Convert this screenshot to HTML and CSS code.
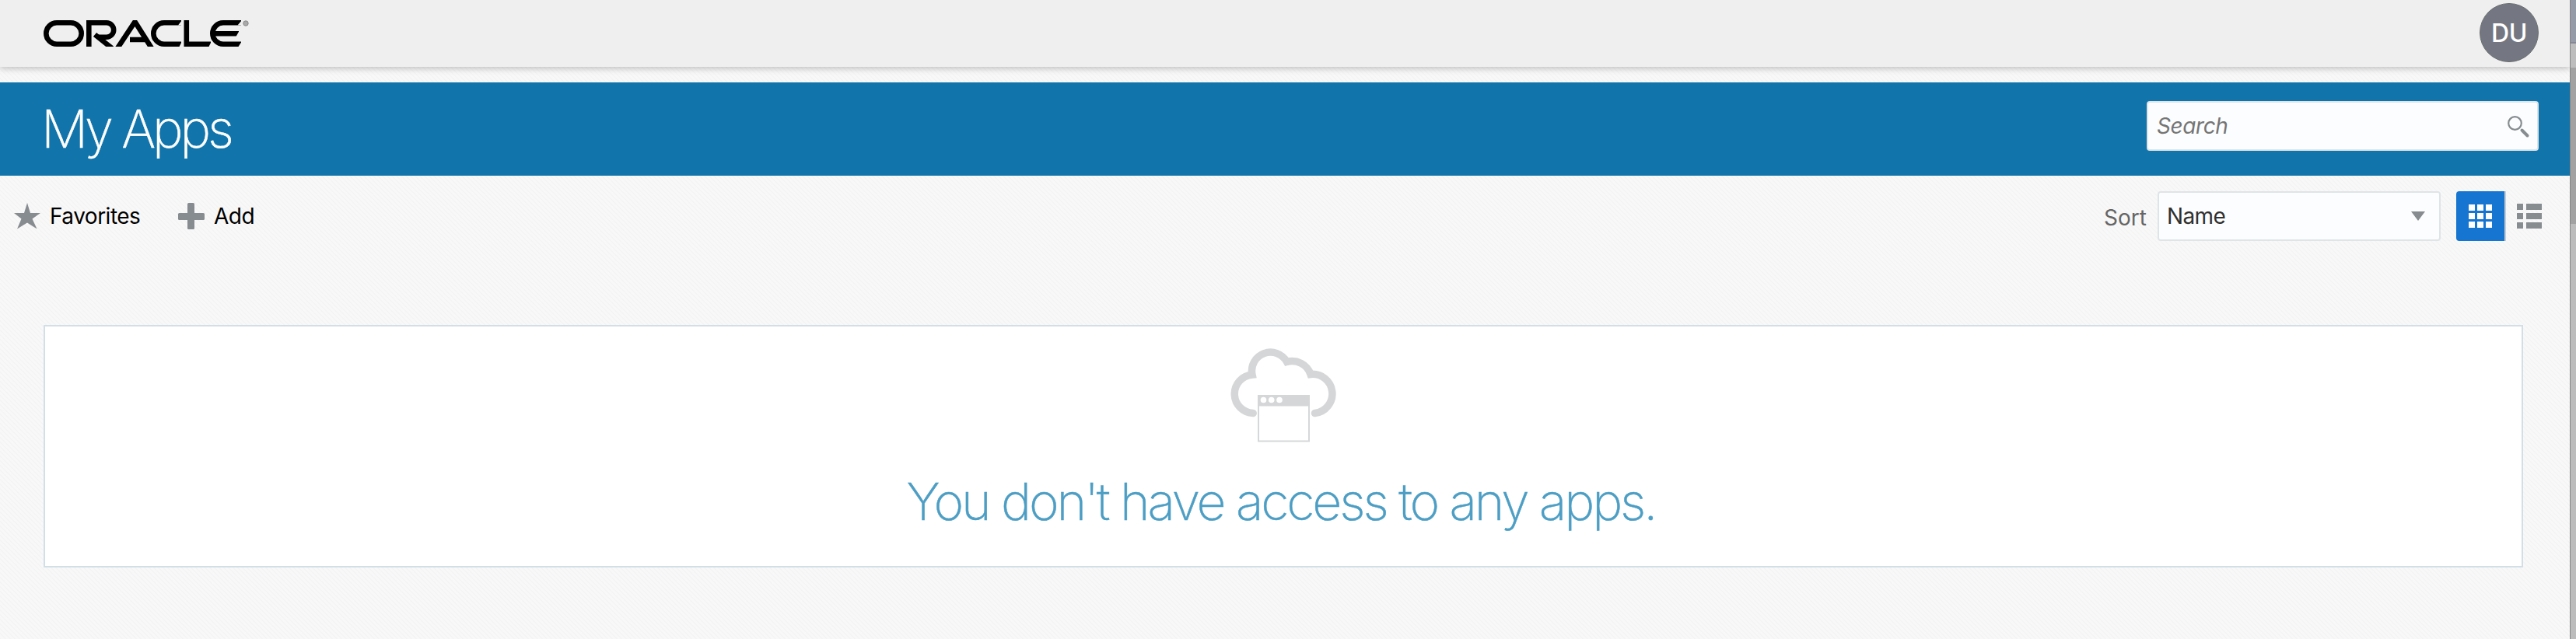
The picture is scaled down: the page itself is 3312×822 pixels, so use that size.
FILE: index.html
```html
<!DOCTYPE html>
<html lang="en">
<head>
<meta charset="utf-8">
<title>My Apps</title>
<link rel="stylesheet" href="styles.css">
</head>
<body>
<div class="window">
  <main class="page">
    <header class="topbar">
      <svg class="logo" viewBox="56 26 264 34" width="264" height="34" role="img" aria-label="Oracle">
        <g fill="none" stroke="#000" stroke-width="6.6">
          <rect x="59.3" y="29.3" width="45.4" height="27.4" rx="13.7"/>
          <path d="M114.3 60V29.3H137a9.2 9.2 0 0 1 0 18.4H125"/>
          <path d="M122 44.5L144 62" />
          <path d="M151 62L173.5 28L195 62M167 51H187"/>
          <path d="M233 29.3H211a13.7 13.7 0 0 0 0 27.4H233"/>
          <path d="M239.8 26V56.7H271"/>
          <path d="M310 29.3H287a13.7 13.7 0 0 0 0 27.4H310M276 43.2H307"/>
        </g>
        <g fill="#efefef"><path d="M234 26v6.6h-5zM234 53v7h-3.500zM311 26v6.600h-5.500zM311 53v7h-4.500zM308 39v8h-4.500zM272 53v7h-3.500z"/></g>
        <circle cx="316" cy="30" r="3.200" fill="#aaa" stroke="#888"/>
      </svg>
      <div class="avatar">DU</div>
    </header>
    <section class="titlebar">
      <h1 class="title">My Apps</h1>
      <label class="search">
        <span class="search-text">Search</span>
        <svg class="search-icon" width="30" height="30" viewBox="0 0 30 30" fill="none" stroke="#878c90"><circle cx="10.500" cy="10.500" r="8.300" stroke-width="2.200"/><path d="M19.500 19.500L26.500 26.500" stroke-width="4" stroke-linecap="round"/></svg>
      </label>
    </section>
    <nav class="toolbar">
      <button class="action favorites"><svg width="34" height="34" viewBox="0 0 34 34" fill="#878c90"><path d="M17 0L21 13H34L23.500 20.500L29.500 33.500L17 25.500L4 33.500L9.500 20.500L0 13H13z"/></svg><span class="label">Favorites</span></button>
      <button class="action add"><svg width="36" height="34" viewBox="0 0 36 34" fill="#878c90"><rect x="13" width="9" height="34" rx="1.500"/><rect x="1" y="13" width="34" height="9" rx="1.500"/></svg><span class="label">Add</span></button>
      <div class="sort">
        <span class="sort-label">Sort</span>
        <div class="select"><span class="select-text">Name</span><svg width="18" height="12"><path d="M0 0H18L9 12z" fill="#878c90"/></svg></div>
      </div>
      <div class="views">
        <button class="view active"><svg width="30" height="30" fill="#fff"><path d="M0 0h8v8H0zM11 0h8v8h-8zM22 0h8v8h-8zM0 11h8v8H0zM11 11h8v8h-8zM22 11h8v8h-8zM0 22h8v8H0zM11 22h8v8h-8zM22 22h8v8h-8z"/></svg></button>
        <button class="view"><svg width="32" height="32" fill="#878c90"><path d="M0 0h8v8H0zM12 0h20v8H12zM0 12h8v8H0zM12 12h20v8H12zM0 24h8v8H0zM12 24h20v8H12z"/></svg></button>
      </div>
    </nav>
    <section class="empty">
      <svg class="cloud" width="138" height="122" viewBox="1581 447 138 122">
        <path d="M1611.200 531.500A24.800 24.800 0 0 1 1610 482A24 24 0 0 1 1654.500 465.500A25 25 0 0 1 1685 481.500A25 25 0 1 1 1690.500 531.500" fill="none" stroke="#d5d6d8" stroke-width="9.500" stroke-linecap="round"/>
        <rect x="1618" y="509" width="65" height="58.500" fill="#fff" stroke="#d5d8d9" stroke-width="2"/>
        <rect x="1617" y="508" width="67" height="14.500" fill="#d5d6d8"/>
        <g fill="#fff"><circle cx="1624.500" cy="514.500" r="3.800"/><circle cx="1634.700" cy="514.500" r="3.800"/><circle cx="1645" cy="514.500" r="3.800"/></g>
      </svg>
      <p class="message">You don't have access to any apps.</p>
    </section>
  </main>
  <aside class="backdrop"><div class="bd-top"></div><div class="bd-light"></div><div class="bd-dark"></div></aside>
</div>
</body>
</html>
```
FILE: styles.css
```css
* { box-sizing: border-box; }
body { margin: 0; font-family: Inter, "Liberation Sans", sans-serif; }
button { border: 0; padding: 0; background: none; font: inherit; }
svg { display: block; flex: none; }
.window { display: flex; width: 3312px; height: 822px; overflow: hidden; }
.page { width: 3304px; height: 822px; background: repeating-linear-gradient(45deg, #f4f4f4 0 1.414px, #f8f8f8 1.414px 4.243px); }
.topbar { display: flex; justify-content: space-between; height: 86px; margin-bottom: 20px; padding: 4px 40px 0 56px; background: #efefef; box-shadow: 0 2px 8px rgba(0,0,0,.24); }
.logo { margin-top: 22px; }
.avatar { width: 76px; height: 76px; border: 1px solid #6b6f70; border-radius: 50%; background: #747782; color: #fff; font-size: 32px; font-weight: 500; line-height: 75px; text-align: center; letter-spacing: -.5px; }
.titlebar { display: flex; justify-content: space-between; height: 120px; padding: 24px 40px 0 53px; background: #1174ab; }
.title { margin: -1px 0 0; color: #fff; font-size: 67px; font-weight: 200; line-height: 74px; white-space: nowrap; letter-spacing: -4.2px; -webkit-text-stroke: .5px currentColor; }
.search { display: flex; justify-content: space-between; width: 504px; height: 64px; padding: 16px 9px 0 11px; border: 2px solid #dfe4e7; border-radius: 4px; background: #fcfdfe; }
.search-text { margin-top: -1px; color: #757575; font-size: 28px; font-style: italic; line-height: 30px; letter-spacing: -.4px; }
.toolbar { display: flex; height: 192px; padding: 20px 22px 0 18px; align-items: flex-start; }
.action { display: flex; align-items: center; height: 64px; color: #000; font-size: 28px; letter-spacing: -.5px; }
.label { line-height: 34px; white-space: nowrap; }
.favorites { width: 210px; gap: 12px; }
.add { gap: 11px; }
.sort { display: flex; align-items: center; margin-left: auto; color: #656565; font-size: 28px; }
.sort-label { margin-top: 3px; }
.select { display: flex; align-items: center; justify-content: space-between; width: 364px; height: 64px; margin-left: 14px; padding: 0 18px 0 10px; border: 2px solid #dfe4e7; border-radius: 4px; background: #fcfdfe; color: #303030; letter-spacing: -.6px; }
.views { display: flex; margin-left: 20px; }
.view { display: grid; width: 60px; height: 64px; place-items: center; }
.active { width: 64px; border-right: 2px solid #c6cdd4; border-radius: 4px 0 0 4px; background: #1675d1; }
.empty { width: 3188px; height: 312px; margin-left: 56px; padding-top: 27px; border: 2px solid #d2dfe7; background: #fff; }
.cloud { margin: 0 0 0 1523px; }
.message { margin: 34px 0 0; padding-right: 6px; color: #4d9ec4; font-size: 66px; font-weight: 200; line-height: 84px; text-align: center; white-space: nowrap; letter-spacing: -3.1px; -webkit-text-stroke: .5px currentColor; }
.backdrop { width: 8px; border-left: 1px solid #858585; background: #bcbcbc; }
.bd-top { height: 56px; border-bottom: 2px solid #858995; background: #969ba8; }
.bd-light { height: 31px; background: #bdbdbd; }
.bd-dark { height: 201px; background: #a2a2a2; }
```
